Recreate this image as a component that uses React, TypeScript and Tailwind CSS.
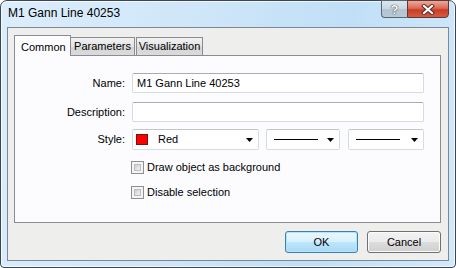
const font = { fontFamily: '"Liberation Sans", Arial, sans-serif' };

function Arrow() {
  return (
    <svg width="7" height="4" viewBox="0 0 7 4" className="shrink-0">
      <path d="M0 0h7L3.5 4z" fill="#000" />
    </svg>
  );
}

function Checkbox({ label }: { label: string }) {
  return (
    <div className="flex items-center gap-[3px] ml-[116px] h-[13px]">
      <div className="w-[13px] h-[13px] border border-[#8e8f8f] bg-[#f4f4f4] p-[2px]">
        <div className="w-full h-full bg-gradient-to-br from-[#cbcfd5] to-[#f2f2f2] border border-[#b9bcc1]" />
      </div>
      <span className="text-[11px] text-black leading-none">{label}</span>
    </div>
  );
}

function Field({ label, value, className = '' }: { label: string; value?: string; className?: string }) {
  return (
    <div className={`flex items-center gap-[7px] ${className}`}>
      <div className="w-[110px] text-right text-[11px] text-black">{label}</div>
      <div className="flex-1 h-[20px] rounded-[2px] border border-[#d5dbe3] border-t-[#abadb3] bg-white flex items-center pl-[4px] text-[11px] text-black">
        {value}
      </div>
    </div>
  );
}

function Select({ className, children }: { className: string; children: React.ReactNode }) {
  return (
    <div className={`h-[21px] rounded-[2px] border border-[#d5dbe3] border-t-[#c3c6cb] bg-white flex items-center pl-[3px] pr-[5px] ${className}`}>
      {children}
    </div>
  );
}

export default function App() {
  return (
    <div className="w-[456px] h-[268px] bg-white" style={font}>
      <div className="w-full h-full flex flex-col rounded-t-[7px] rounded-b-[4px] border border-[#3b4652] bg-[linear-gradient(100deg,#dcedfb_0%,#cfe6f8_40%,#c0dff6_70%,#d2e9fa_100%)] shadow-[inset_0_0_0_1px_rgba(255,255,255,0.7)]">
        {/* title bar */}
        <div className="h-[26px] flex items-start shrink-0">
          <div className="pl-[7px] pt-[6px] text-[12px] text-black leading-none">M1 Gann Line 40253</div>
          <div className="ml-auto mr-[6px] -mt-px flex h-[18px]">
            <div className="w-[26px] h-full rounded-bl-[4px] border border-[#5a6672] border-r-0 bg-[linear-gradient(#dbe6ef_0%,#c9d6e2_50%,#b3c3d2_51%,#b8c8d6_100%)] flex items-center justify-center">
              <span className="text-[13px] font-bold text-white leading-none [text-shadow:0_0_1px_#333,0_0_1px_#333]">?</span>
            </div>
            <div className="w-[42px] h-full rounded-br-[4px] border border-[#5a3a36] bg-[linear-gradient(#eda89b_0%,#dd6a56_45%,#c93c28_55%,#d85a42_100%)] flex items-center justify-center">
              <svg width="14" height="11" viewBox="0 0 14 11">
                <path d="M3 2l8 7M11 2l-8 7" stroke="#4a2a26" strokeWidth="4" strokeLinecap="square" />
                <path d="M3 2l8 7M11 2l-8 7" stroke="#fff" strokeWidth="2.2" strokeLinecap="square" />
              </svg>
            </div>
          </div>
        </div>

        {/* client */}
        <div className="flex-1 mx-[6px] mb-[6px] border border-[#7d8894] bg-[#eeeeec] flex flex-col">
          <div className="flex items-end pl-[6px] pt-[7px] h-[27px] shrink-0">
            <div className="relative z-10 h-[21px] -mb-px w-[57px] border border-b-0 border-[#898c95] bg-[#fcfcfe] text-[11px] text-black pl-[6px] pt-[3px]">
              Common
            </div>
            <div className="h-[18px] w-[65px] -ml-px border border-b-0 border-[#898c95] bg-[linear-gradient(#f2f2f2,#e3e3e3_50%,#d6d6d6_51%,#dadada)] text-[11px] text-black flex items-center justify-center">
              Parameters
            </div>
            <div className="h-[18px] w-[67px] ml-px border border-b-0 border-[#898c95] bg-[linear-gradient(#f2f2f2,#e3e3e3_50%,#d6d6d6_51%,#dadada)] text-[11px] text-black flex items-center justify-center">
              Visualization
            </div>
          </div>

          <div className="flex-1 ml-[6px] mr-[7px] border border-[#898c95] bg-[#fcfcfe] pt-[17px] pr-[16px] flex flex-col">
            <Field label="Name:" value="M1 Gann Line 40253" />
            <Field label="Description:" className="mt-[9px]" />
            <div className="flex items-center gap-[7px] mt-[7px]">
              <div className="w-[110px] text-right text-[11px] text-black">Style:</div>
              <Select className="w-[127px]">
                <div className="w-[12px] h-[11px] border border-[#7a1010] bg-[#ff0000] shrink-0" />
                <span className="ml-[10px] text-[11px] text-black flex-1">Red</span>
                <Arrow />
              </Select>
              <Select className="w-[74px]">
                <div className="ml-[4px] w-[44px] h-px bg-black" />
                <div className="flex-1" />
                <Arrow />
              </Select>
              <Select className="w-[76px] ml-px">
                <div className="ml-[4px] w-[44px] h-px bg-black" />
                <div className="flex-1" />
                <Arrow />
              </Select>
            </div>
            <div className="mt-[11px]">
              <Checkbox label="Draw object as background" />
            </div>
            <div className="mt-[12px]">
              <Checkbox label="Disable selection" />
            </div>
          </div>

          <div className="h-[37px] shrink-0 flex items-start justify-end gap-[9px] pt-[8px] pr-[7px]">
            <button className="w-[73px] h-[22px] rounded-[3px] border border-[#3c7fb1] bg-[linear-gradient(#eaf6fd,#d9f0fc_50%,#bee6fd_51%,#a7d9f5)] shadow-[inset_0_0_0_1px_#b5e4f7] text-[11px] text-black">
              OK
            </button>
            <button className="w-[74px] h-[22px] rounded-[3px] border border-[#707070] bg-[linear-gradient(#f2f2f2,#ebebeb_50%,#dddddd_51%,#cfcfcf)] shadow-[inset_0_0_0_1px_#fbfbfb] text-[11px] text-black">
              Cancel
            </button>
          </div>
        </div>
      </div>
    </div>
  );
}
